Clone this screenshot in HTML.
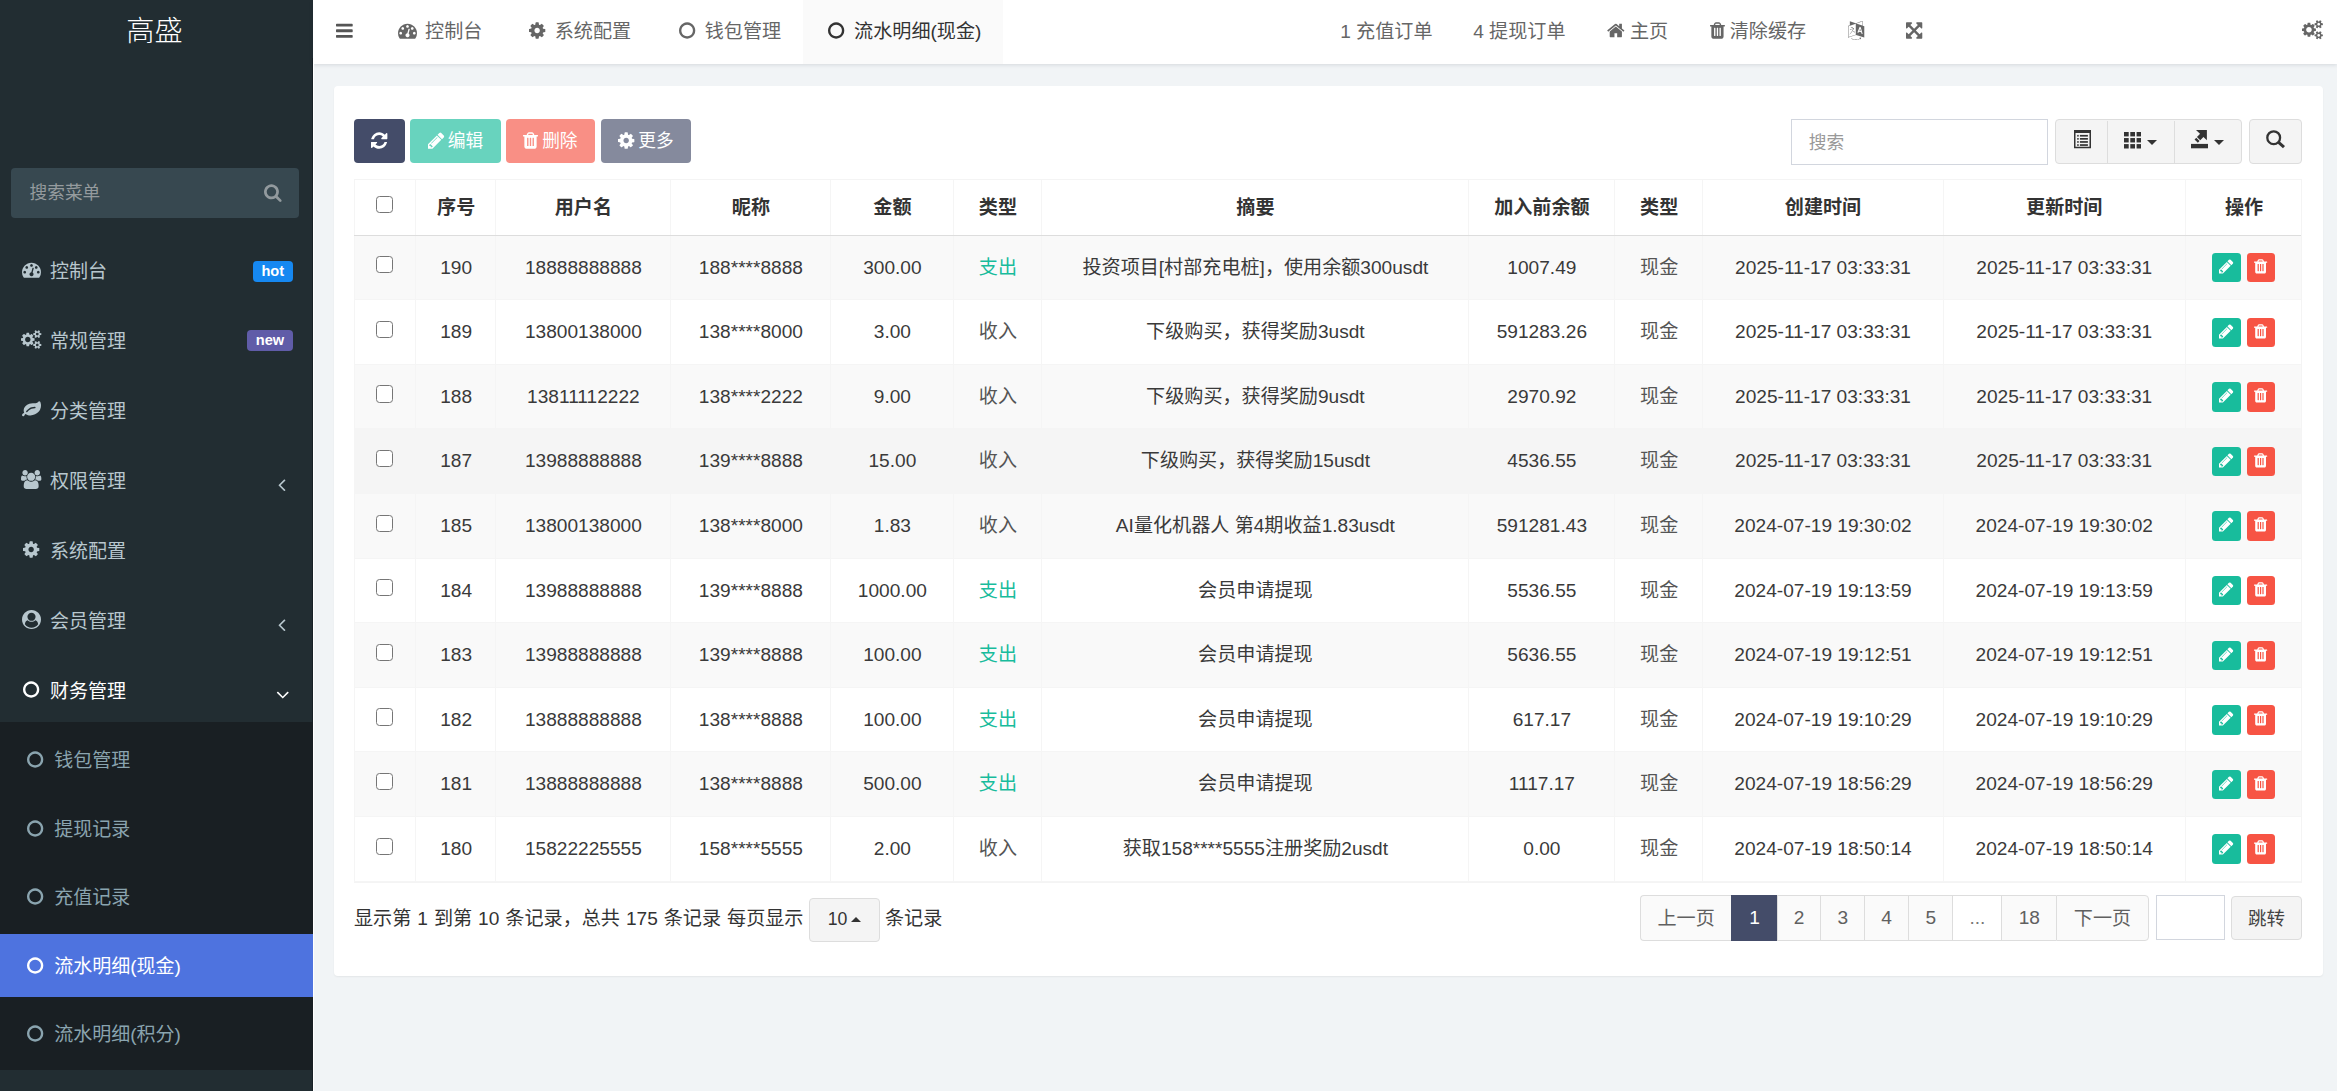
<!DOCTYPE html>
<html lang="zh-CN"><head><meta charset="utf-8"><title>高盛</title>
<style>
*{box-sizing:border-box;margin:0;padding:0}
html,body{width:2337px;height:1091px;overflow:hidden}
body{position:relative;background:#f1f4f6;font-family:"Liberation Sans","Noto Sans CJK SC",sans-serif;font-size:19.1px;color:#3a3a3a;line-height:1}
svg.fa{display:inline-block;fill:currentColor;overflow:visible}
.abs{position:absolute}
#sidebar{position:absolute;left:0;top:0;width:312.8px;height:1091px;background:#222d32}
#logo{position:absolute;left:0;top:0;width:313px;height:64px;line-height:62.4px;text-align:center;color:#fff;font-size:28.2px;font-weight:300;padding-right:4px}
#msearch{position:absolute;left:11px;top:168px;width:288px;height:49.5px;background:#374850;border-radius:4px;color:#959b9e;font-size:17.7px;line-height:51.5px;padding-left:18.5px}
#msearch svg{position:absolute;left:253px;top:15px;color:#929a9e}
.mi{position:absolute;left:0;width:313px;height:70px;color:#b8c7ce;font-size:19px;line-height:70px}
.mi .ic{position:absolute;left:19.2px;top:0;width:24.4px;text-align:center}
.mi .tx{position:absolute;left:50px;top:1.6px;white-space:nowrap}
.mi.act{color:#fff}
.badge{position:absolute;height:21.5px;line-height:21px;border-radius:4px;color:#fff;font-weight:bold;font-size:14.6px;text-align:center}
#sub{position:absolute;left:0;top:722px;width:313px;height:348px;background:#191f23}
.si{position:absolute;left:0;width:313px;height:63px;line-height:63px;color:#8aa4af;font-size:19px}
.si .ic{position:absolute;left:23.2px;top:.7px;width:24.4px;text-align:center}
.si .tx{position:absolute;left:54.2px;top:1.2px;white-space:nowrap}
.si.act{background:#4e73df;color:#fff}
#header{position:absolute;left:313px;top:0;width:2024px;height:64.3px;background:#fff;box-shadow:0 1px 4px rgba(0,21,41,.12);color:#666;font-size:19.1px;line-height:63.4px}
#header svg.fa{position:relative;top:-1px}
.tab{position:absolute;top:0;height:64px;white-space:nowrap}
.tab.act{background:#fafafa;color:#333}
.nv{position:absolute;top:0;height:64px;white-space:nowrap}
#panel{position:absolute;left:334px;top:85.8px;width:1988.7px;height:890.2px;background:#fff;border-radius:4px;box-shadow:0 1px 2px rgba(0,0,0,.06)}
.btn{position:absolute;top:119.4px;height:44px;word-spacing:-1.2px;border-radius:4px;color:#fff;font-size:17.7px;line-height:44px;text-align:center;white-space:nowrap}
.dis{opacity:.65}
.gbtn{position:absolute;background:#f4f4f4;border:1.36px solid #ddd;color:#333}
#tbl{position:absolute;left:0;top:0}
.row{position:absolute;left:353.7px;width:1947px;height:64.6px;border-bottom:1px solid #f5f5f5}
.row.odd{background:#f9f9f9}
.c{position:absolute;top:0;height:100%;text-align:center;white-space:nowrap;border-left:1px solid #f5f5f5;line-height:63.2px;padding-left:1.4px}
.hd{font-weight:bold;color:#333}
.c.hd{line-height:56px}
.cb{position:absolute;width:17.4px;height:17.4px;border:1.5px solid #767676;border-radius:3.5px;background:#fff}
.ob{position:absolute;width:29px;height:29.4px;border-radius:3.5px;color:#fff;display:flex;align-items:center;justify-content:center}
.ob svg{display:block;margin-top:-2.6px}
.pg{position:absolute;top:895.2px;height:45.4px;line-height:43px;text-align:center;background:#fafafa;border:1.36px solid #ddd;border-right-width:0;color:#606060;font-size:19.1px}
</style></head>
<body>
<div id="sidebar">
<div id="logo">高盛</div>
<div id="msearch">搜索菜单<svg class="fa" viewBox="0 -1536 1664 1792" style="width:17.64px;height:19.00px;vertical-align:-2.71px;"><path transform="scale(1,-1)" d="M1152 704q0 185 -131.5 316.5t-316.5 131.5t-316.5 -131.5t-131.5 -316.5t131.5 -316.5t316.5 -131.5t316.5 131.5t131.5 316.5zM1664 -128q0 -52 -38 -90t-90 -38q-54 0 -90 38l-343 342q-179 -124 -399 -124q-143 0 -273.5 55.5t-225 150t-150 225t-55.5 273.5 t55.5 273.5t150 225t225 150t273.5 55.5t273.5 -55.5t225 -150t150 -225t55.5 -273.5q0 -220 -124 -399l343 -343q37 -37 37 -90z"/></svg></div>
<div class="mi" style="top:235.0px"><span class="ic"><svg class="fa" viewBox="0 -1536 1792 1792" style="width:19.00px;height:19.00px;vertical-align:-2.71px;"><path transform="scale(1,-1)" d="M384 384q0 53 -37.5 90.5t-90.5 37.5t-90.5 -37.5t-37.5 -90.5t37.5 -90.5t90.5 -37.5t90.5 37.5t37.5 90.5zM576 832q0 53 -37.5 90.5t-90.5 37.5t-90.5 -37.5t-37.5 -90.5t37.5 -90.5t90.5 -37.5t90.5 37.5t37.5 90.5zM1004 351l101 382q6 26 -7.5 48.5t-38.5 29.5 t-48 -6.5t-30 -39.5l-101 -382q-60 -5 -107 -43.5t-63 -98.5q-20 -77 20 -146t117 -89t146 20t89 117q16 60 -6 117t-72 91zM1664 384q0 53 -37.5 90.5t-90.5 37.5t-90.5 -37.5t-37.5 -90.5t37.5 -90.5t90.5 -37.5t90.5 37.5t37.5 90.5zM1024 1024q0 53 -37.5 90.5 t-90.5 37.5t-90.5 -37.5t-37.5 -90.5t37.5 -90.5t90.5 -37.5t90.5 37.5t37.5 90.5zM1472 832q0 53 -37.5 90.5t-90.5 37.5t-90.5 -37.5t-37.5 -90.5t37.5 -90.5t90.5 -37.5t90.5 37.5t37.5 90.5zM1792 384q0 -261 -141 -483q-19 -29 -54 -29h-1402q-35 0 -54 29 q-141 221 -141 483q0 182 71 348t191 286t286 191t348 71t348 -71t286 -191t191 -286t71 -348z"/></svg></span><span class="tx">控制台</span></div>
<div class="mi" style="top:305.0px"><span class="ic"><svg class="fa" viewBox="0 -1536 1920 1792" style="width:20.36px;height:19.00px;vertical-align:-2.71px;"><path transform="scale(1,-1)" d="M896 640q0 106 -75 181t-181 75t-181 -75t-75 -181t75 -181t181 -75t181 75t75 181zM1664 128q0 52 -38 90t-90 38t-90 -38t-38 -90q0 -53 37.5 -90.5t90.5 -37.5t90.5 37.5t37.5 90.5zM1664 1152q0 52 -38 90t-90 38t-90 -38t-38 -90q0 -53 37.5 -90.5t90.5 -37.5 t90.5 37.5t37.5 90.5zM1280 731v-185q0 -10 -7 -19.5t-16 -10.5l-155 -24q-11 -35 -32 -76q34 -48 90 -115q7 -11 7 -20q0 -12 -7 -19q-23 -30 -82.5 -89.5t-78.5 -59.5q-11 0 -21 7l-115 90q-37 -19 -77 -31q-11 -108 -23 -155q-7 -24 -30 -24h-186q-11 0 -20 7.5t-10 17.5 l-23 153q-34 10 -75 31l-118 -89q-7 -7 -20 -7q-11 0 -21 8q-144 133 -144 160q0 9 7 19q10 14 41 53t47 61q-23 44 -35 82l-152 24q-10 1 -17 9.5t-7 19.5v185q0 10 7 19.5t16 10.5l155 24q11 35 32 76q-34 48 -90 115q-7 11 -7 20q0 12 7 20q22 30 82 89t79 59q11 0 21 -7 l115 -90q34 18 77 32q11 108 23 154q7 24 30 24h186q11 0 20 -7.5t10 -17.5l23 -153q34 -10 75 -31l118 89q8 7 20 7q11 0 21 -8q144 -133 144 -160q0 -8 -7 -19q-12 -16 -42 -54t-45 -60q23 -48 34 -82l152 -23q10 -2 17 -10.5t7 -19.5zM1920 198v-140q0 -16 -149 -31 q-12 -27 -30 -52q51 -113 51 -138q0 -4 -4 -7q-122 -71 -124 -71q-8 0 -46 47t-52 68q-20 -2 -30 -2t-30 2q-14 -21 -52 -68t-46 -47q-2 0 -124 71q-4 3 -4 7q0 25 51 138q-18 25 -30 52q-149 15 -149 31v140q0 16 149 31q13 29 30 52q-51 113 -51 138q0 4 4 7q4 2 35 20 t59 34t30 16q8 0 46 -46.5t52 -67.5q20 2 30 2t30 -2q51 71 92 112l6 2q4 0 124 -70q4 -3 4 -7q0 -25 -51 -138q17 -23 30 -52q149 -15 149 -31zM1920 1222v-140q0 -16 -149 -31q-12 -27 -30 -52q51 -113 51 -138q0 -4 -4 -7q-122 -71 -124 -71q-8 0 -46 47t-52 68 q-20 -2 -30 -2t-30 2q-14 -21 -52 -68t-46 -47q-2 0 -124 71q-4 3 -4 7q0 25 51 138q-18 25 -30 52q-149 15 -149 31v140q0 16 149 31q13 29 30 52q-51 113 -51 138q0 4 4 7q4 2 35 20t59 34t30 16q8 0 46 -46.5t52 -67.5q20 2 30 2t30 -2q51 71 92 112l6 2q4 0 124 -70 q4 -3 4 -7q0 -25 -51 -138q17 -23 30 -52q149 -15 149 -31z"/></svg></span><span class="tx">常规管理</span></div>
<div class="mi" style="top:375.0px"><span class="ic"><svg class="fa" viewBox="0 -1536 1792 1792" style="width:19.00px;height:19.00px;vertical-align:-2.71px;"><path transform="scale(1,-1)" d="M1280 832q0 26 -19 45t-45 19q-172 0 -318 -49.5t-259.5 -134t-235.5 -219.5q-19 -21 -19 -45q0 -26 19 -45t45 -19q24 0 45 19q27 24 74 71t67 66q137 124 268.5 176t313.5 52q26 0 45 19t19 45zM1792 1030q0 -95 -20 -193q-46 -224 -184.5 -383t-357.5 -268 q-214 -108 -438 -108q-148 0 -286 47q-15 5 -88 42t-96 37q-16 0 -39.5 -32t-45 -70t-52.5 -70t-60 -32q-43 0 -63.5 17.5t-45.5 59.5q-2 4 -6 11t-5.5 10t-3 9.5t-1.5 13.5q0 35 31 73.5t68 65.5t68 56t31 48q0 4 -14 38t-16 44q-9 51 -9 104q0 115 43.5 220t119 184.5 t170.5 139t204 95.5q55 18 145 25.5t179.5 9t178.5 6t163.5 24t113.5 56.5l29.5 29.5t29.5 28t27 20t36.5 16t43.5 4.5q39 0 70.5 -46t47.5 -112t24 -124t8 -96z"/></svg></span><span class="tx">分类管理</span></div>
<div class="mi" style="top:445.0px"><span class="ic"><svg class="fa" viewBox="0 -1536 1920 1792" style="width:20.36px;height:19.00px;vertical-align:-2.71px;"><path transform="scale(1,-1)" d="M593 640q-162 -5 -265 -128h-134q-82 0 -138 40.5t-56 118.5q0 353 124 353q6 0 43.5 -21t97.5 -42.5t119 -21.5q67 0 133 23q-5 -37 -5 -66q0 -139 81 -256zM1664 3q0 -120 -73 -189.5t-194 -69.5h-874q-121 0 -194 69.5t-73 189.5q0 53 3.5 103.5t14 109t26.5 108.5 t43 97.5t62 81t85.5 53.5t111.5 20q10 0 43 -21.5t73 -48t107 -48t135 -21.5t135 21.5t107 48t73 48t43 21.5q61 0 111.5 -20t85.5 -53.5t62 -81t43 -97.5t26.5 -108.5t14 -109t3.5 -103.5zM640 1280q0 -106 -75 -181t-181 -75t-181 75t-75 181t75 181t181 75t181 -75 t75 -181zM1344 896q0 -159 -112.5 -271.5t-271.5 -112.5t-271.5 112.5t-112.5 271.5t112.5 271.5t271.5 112.5t271.5 -112.5t112.5 -271.5zM1920 671q0 -78 -56 -118.5t-138 -40.5h-134q-103 123 -265 128q81 117 81 256q0 29 -5 66q66 -23 133 -23q59 0 119 21.5t97.5 42.5 t43.5 21q124 0 124 -353zM1792 1280q0 -106 -75 -181t-181 -75t-181 75t-75 181t75 181t181 75t181 -75t75 -181z"/></svg></span><span class="tx">权限管理</span></div>
<div class="mi" style="top:515.0px"><span class="ic"><svg class="fa" viewBox="0 -1536 1536 1792" style="width:16.29px;height:19.00px;vertical-align:-2.71px;"><path transform="scale(1,-1)" d="M1024 640q0 106 -75 181t-181 75t-181 -75t-75 -181t75 -181t181 -75t181 75t75 181zM1536 749v-222q0 -12 -8 -23t-20 -13l-185 -28q-19 -54 -39 -91q35 -50 107 -138q10 -12 10 -25t-9 -23q-27 -37 -99 -108t-94 -71q-12 0 -26 9l-138 108q-44 -23 -91 -38 q-16 -136 -29 -186q-7 -28 -36 -28h-222q-14 0 -24.5 8.5t-11.5 21.5l-28 184q-49 16 -90 37l-141 -107q-10 -9 -25 -9q-14 0 -25 11q-126 114 -165 168q-7 10 -7 23q0 12 8 23q15 21 51 66.5t54 70.5q-27 50 -41 99l-183 27q-13 2 -21 12.5t-8 23.5v222q0 12 8 23t19 13 l186 28q14 46 39 92q-40 57 -107 138q-10 12 -10 24q0 10 9 23q26 36 98.5 107.5t94.5 71.5q13 0 26 -10l138 -107q44 23 91 38q16 136 29 186q7 28 36 28h222q14 0 24.5 -8.5t11.5 -21.5l28 -184q49 -16 90 -37l142 107q9 9 24 9q13 0 25 -10q129 -119 165 -170q7 -8 7 -22 q0 -12 -8 -23q-15 -21 -51 -66.5t-54 -70.5q26 -50 41 -98l183 -28q13 -2 21 -12.5t8 -23.5z"/></svg></span><span class="tx">系统配置</span></div>
<div class="mi" style="top:585.0px"><span class="ic"><svg class="fa" viewBox="0 -1536 1792 1792" style="width:19.00px;height:19.00px;vertical-align:-2.71px;"><path transform="scale(1,-1)" d="M1523 197q-22 155 -87.5 257.5t-184.5 118.5q-67 -74 -159.5 -115.5t-195.5 -41.5t-195.5 41.5t-159.5 115.5q-119 -16 -184.5 -118.5t-87.5 -257.5q106 -150 271 -237.5t356 -87.5t356 87.5t271 237.5zM1280 896q0 159 -112.5 271.5t-271.5 112.5t-271.5 -112.5 t-112.5 -271.5t112.5 -271.5t271.5 -112.5t271.5 112.5t112.5 271.5zM1792 640q0 -182 -71 -347.5t-190.5 -286t-285.5 -191.5t-349 -71q-182 0 -348 71t-286 191t-191 286t-71 348t71 348t191 286t286 191t348 71t348 -71t286 -191t191 -286t71 -348z"/></svg></span><span class="tx">会员管理</span></div>
<div class="mi act" style="top:655.0px"><span class="ic"><svg class="fa" viewBox="0 -1536 1536 1792" style="width:16.29px;height:19.00px;vertical-align:-2.71px;"><path transform="scale(1,-1)" d="M768 1184q-148 0 -273 -73t-198 -198t-73 -273t73 -273t198 -198t273 -73t273 73t198 198t73 273t-73 273t-198 198t-273 73zM1536 640q0 -209 -103 -385.5t-279.5 -279.5t-385.5 -103t-385.5 103t-279.5 279.5t-103 385.5t103 385.5t279.5 279.5t385.5 103t385.5 -103 t279.5 -279.5t103 -385.5z"/></svg></span><span class="tx">财务管理</span></div>
<div class="badge" style="left:252.6px;top:260.5px;width:40.4px;background:#1688f1">hot</div>
<div class="badge" style="left:247px;top:329.5px;width:46px;background:#605ca8">new</div>
<div class="abs" style="left:278px;top:474px;color:#b8c7ce"><svg class="fa" viewBox="0 -1536 640 1792" style="width:7.50px;height:21.00px;vertical-align:-3.00px;"><path transform="scale(1,-1)" d="M627 992q0 -13 -10 -23l-393 -393l393 -393q10 -10 10 -23t-10 -23l-50 -50q-10 -10 -23 -10t-23 10l-466 466q-10 10 -10 23t10 23l466 466q10 10 23 10t23 -10l50 -50q10 -10 10 -23z"/></svg></div>
<div class="abs" style="left:278px;top:614px;color:#b8c7ce"><svg class="fa" viewBox="0 -1536 640 1792" style="width:7.50px;height:21.00px;vertical-align:-3.00px;"><path transform="scale(1,-1)" d="M627 992q0 -13 -10 -23l-393 -393l393 -393q10 -10 10 -23t-10 -23l-50 -50q-10 -10 -23 -10t-23 10l-466 466q-10 10 -10 23t10 23l466 466q10 10 23 10t23 -10l50 -50q10 -10 10 -23z"/></svg></div>
<div class="abs" style="left:276px;top:684px;color:#fff"><svg class="fa" viewBox="0 -1536 1152 1792" style="width:13.50px;height:21.00px;vertical-align:-3.00px;"><path transform="scale(1,-1)" d="M1075 800q0 -13 -10 -23l-466 -466q-10 -10 -23 -10t-23 10l-466 466q-10 10 -10 23t10 23l50 50q10 10 23 10t23 -10l393 -393l393 393q10 10 23 10t23 -10l50 -50q10 -10 10 -23z"/></svg></div>
<div id="sub">
<div class="si" style="top:5.5px"><span class="ic"><svg class="fa" viewBox="0 -1536 1536 1792" style="width:16.29px;height:19.00px;vertical-align:-2.71px;"><path transform="scale(1,-1)" d="M768 1184q-148 0 -273 -73t-198 -198t-73 -273t73 -273t198 -198t273 -73t273 73t198 198t73 273t-73 273t-198 198t-273 73zM1536 640q0 -209 -103 -385.5t-279.5 -279.5t-385.5 -103t-385.5 103t-279.5 279.5t-103 385.5t103 385.5t279.5 279.5t385.5 103t385.5 -103 t279.5 -279.5t103 -385.5z"/></svg></span><span class="tx">钱包管理</span></div>
<div class="si" style="top:74.5px"><span class="ic"><svg class="fa" viewBox="0 -1536 1536 1792" style="width:16.29px;height:19.00px;vertical-align:-2.71px;"><path transform="scale(1,-1)" d="M768 1184q-148 0 -273 -73t-198 -198t-73 -273t73 -273t198 -198t273 -73t273 73t198 198t73 273t-73 273t-198 198t-273 73zM1536 640q0 -209 -103 -385.5t-279.5 -279.5t-385.5 -103t-385.5 103t-279.5 279.5t-103 385.5t103 385.5t279.5 279.5t385.5 103t385.5 -103 t279.5 -279.5t103 -385.5z"/></svg></span><span class="tx">提现记录</span></div>
<div class="si" style="top:143.0px"><span class="ic"><svg class="fa" viewBox="0 -1536 1536 1792" style="width:16.29px;height:19.00px;vertical-align:-2.71px;"><path transform="scale(1,-1)" d="M768 1184q-148 0 -273 -73t-198 -198t-73 -273t73 -273t198 -198t273 -73t273 73t198 198t73 273t-73 273t-198 198t-273 73zM1536 640q0 -209 -103 -385.5t-279.5 -279.5t-385.5 -103t-385.5 103t-279.5 279.5t-103 385.5t103 385.5t279.5 279.5t385.5 103t385.5 -103 t279.5 -279.5t103 -385.5z"/></svg></span><span class="tx">充值记录</span></div>
<div class="si act" style="top:212.0px"><span class="ic"><svg class="fa" viewBox="0 -1536 1536 1792" style="width:16.29px;height:19.00px;vertical-align:-2.71px;"><path transform="scale(1,-1)" d="M768 1184q-148 0 -273 -73t-198 -198t-73 -273t73 -273t198 -198t273 -73t273 73t198 198t73 273t-73 273t-198 198t-273 73zM1536 640q0 -209 -103 -385.5t-279.5 -279.5t-385.5 -103t-385.5 103t-279.5 279.5t-103 385.5t103 385.5t279.5 279.5t385.5 103t385.5 -103 t279.5 -279.5t103 -385.5z"/></svg></span><span class="tx">流水明细(现金)</span></div>
<div class="si" style="top:280.0px"><span class="ic"><svg class="fa" viewBox="0 -1536 1536 1792" style="width:16.29px;height:19.00px;vertical-align:-2.71px;"><path transform="scale(1,-1)" d="M768 1184q-148 0 -273 -73t-198 -198t-73 -273t73 -273t198 -198t273 -73t273 73t198 198t73 273t-73 273t-198 198t-273 73zM1536 640q0 -209 -103 -385.5t-279.5 -279.5t-385.5 -103t-385.5 103t-279.5 279.5t-103 385.5t103 385.5t279.5 279.5t385.5 103t385.5 -103 t279.5 -279.5t103 -385.5z"/></svg></span><span class="tx">流水明细(积分)</span></div>
</div>
</div>
<div id="header">
<div class="abs" style="left:22.5px;top:1px;color:#555"><svg class="fa" viewBox="0 -1536 1536 1792" style="width:16.71px;height:19.50px;vertical-align:-2.79px;"><path transform="scale(1,-1)" d="M1536 192v-128q0 -26 -19 -45t-45 -19h-1408q-26 0 -45 19t-19 45v128q0 26 19 45t45 19h1408q26 0 45 -19t19 -45zM1536 704v-128q0 -26 -19 -45t-45 -19h-1408q-26 0 -45 19t-19 45v128q0 26 19 45t45 19h1408q26 0 45 -19t19 -45zM1536 1216v-128q0 -26 -19 -45 t-45 -19h-1408q-26 0 -45 19t-19 45v128q0 26 19 45t45 19h1408q26 0 45 -19t19 -45z"/></svg></div>
<div class="tab" style="left:62.0px;width:128.7px;padding-left:20.4px"><svg class="fa" viewBox="0 -1536 1792 1792" style="width:19.00px;height:19.00px;vertical-align:-2.71px;margin:0 2.71px;"><path transform="scale(1,-1)" d="M384 384q0 53 -37.5 90.5t-90.5 37.5t-90.5 -37.5t-37.5 -90.5t37.5 -90.5t90.5 -37.5t90.5 37.5t37.5 90.5zM576 832q0 53 -37.5 90.5t-90.5 37.5t-90.5 -37.5t-37.5 -90.5t37.5 -90.5t90.5 -37.5t90.5 37.5t37.5 90.5zM1004 351l101 382q6 26 -7.5 48.5t-38.5 29.5 t-48 -6.5t-30 -39.5l-101 -382q-60 -5 -107 -43.5t-63 -98.5q-20 -77 20 -146t117 -89t146 20t89 117q16 60 -6 117t-72 91zM1664 384q0 53 -37.5 90.5t-90.5 37.5t-90.5 -37.5t-37.5 -90.5t37.5 -90.5t90.5 -37.5t90.5 37.5t37.5 90.5zM1024 1024q0 53 -37.5 90.5 t-90.5 37.5t-90.5 -37.5t-37.5 -90.5t37.5 -90.5t90.5 -37.5t90.5 37.5t37.5 90.5zM1472 832q0 53 -37.5 90.5t-90.5 37.5t-90.5 -37.5t-37.5 -90.5t37.5 -90.5t90.5 -37.5t90.5 37.5t37.5 90.5zM1792 384q0 -261 -141 -483q-19 -29 -54 -29h-1402q-35 0 -54 29 q-141 221 -141 483q0 182 71 348t191 286t286 191t348 71t348 -71t286 -191t191 -286t71 -348z"/></svg> 控制台</div>
<div class="tab" style="left:191.6px;width:148.9px;padding-left:20.4px"><svg class="fa" viewBox="0 -1536 1536 1792" style="width:16.29px;height:19.00px;vertical-align:-2.71px;margin:0 4.07px;"><path transform="scale(1,-1)" d="M1024 640q0 106 -75 181t-181 75t-181 -75t-75 -181t75 -181t181 -75t181 75t75 181zM1536 749v-222q0 -12 -8 -23t-20 -13l-185 -28q-19 -54 -39 -91q35 -50 107 -138q10 -12 10 -25t-9 -23q-27 -37 -99 -108t-94 -71q-12 0 -26 9l-138 108q-44 -23 -91 -38 q-16 -136 -29 -186q-7 -28 -36 -28h-222q-14 0 -24.5 8.5t-11.5 21.5l-28 184q-49 16 -90 37l-141 -107q-10 -9 -25 -9q-14 0 -25 11q-126 114 -165 168q-7 10 -7 23q0 12 8 23q15 21 51 66.5t54 70.5q-27 50 -41 99l-183 27q-13 2 -21 12.5t-8 23.5v222q0 12 8 23t19 13 l186 28q14 46 39 92q-40 57 -107 138q-10 12 -10 24q0 10 9 23q26 36 98.5 107.5t94.5 71.5q13 0 26 -10l138 -107q44 23 91 38q16 136 29 186q7 28 36 28h222q14 0 24.5 -8.5t11.5 -21.5l28 -184q49 -16 90 -37l142 107q9 9 24 9q13 0 25 -10q129 -119 165 -170q7 -8 7 -22 q0 -12 -8 -23q-15 -21 -51 -66.5t-54 -70.5q26 -50 41 -98l183 -28q13 -2 21 -12.5t8 -23.5z"/></svg> 系统配置</div>
<div class="tab" style="left:341.6px;width:147.4px;padding-left:20.4px"><svg class="fa" viewBox="0 -1536 1536 1792" style="width:16.29px;height:19.00px;vertical-align:-2.71px;margin:0 4.07px;"><path transform="scale(1,-1)" d="M768 1184q-148 0 -273 -73t-198 -198t-73 -273t73 -273t198 -198t273 -73t273 73t198 198t73 273t-73 273t-198 198t-273 73zM1536 640q0 -209 -103 -385.5t-279.5 -279.5t-385.5 -103t-385.5 103t-279.5 279.5t-103 385.5t103 385.5t279.5 279.5t385.5 103t385.5 -103 t279.5 -279.5t103 -385.5z"/></svg> 钱包管理</div>
<div class="tab act" style="left:490.0px;width:200.0px;padding-left:21.4px"><svg class="fa" viewBox="0 -1536 1536 1792" style="width:16.29px;height:19.00px;vertical-align:-2.71px;margin:0 4.07px;"><path transform="scale(1,-1)" d="M768 1184q-148 0 -273 -73t-198 -198t-73 -273t73 -273t198 -198t273 -73t273 73t198 198t73 273t-73 273t-198 198t-273 73zM1536 640q0 -209 -103 -385.5t-279.5 -279.5t-385.5 -103t-385.5 103t-279.5 279.5t-103 385.5t103 385.5t279.5 279.5t385.5 103t385.5 -103 t279.5 -279.5t103 -385.5z"/></svg> 流水明细(现金)</div>
<div class="nv" style="left:1027.2px">1 充值订单</div>
<div class="nv" style="left:1160.2px">4 提现订单</div>
<div class="nv" style="left:1294.0px"><svg class="fa" viewBox="0 -1536 1664 1792" style="width:17.64px;height:19.00px;vertical-align:-2.71px;"><path transform="scale(1,-1)" d="M1408 544v-480q0 -26 -19 -45t-45 -19h-384v384h-256v-384h-384q-26 0 -45 19t-19 45v480q0 1 0.5 3t0.5 3l575 474l575 -474q1 -2 1 -6zM1631 613l-62 -74q-8 -9 -21 -11h-3q-13 0 -21 7l-692 577l-692 -577q-12 -8 -24 -7q-13 2 -21 11l-62 74q-8 10 -7 23.5t11 21.5 l719 599q32 26 76 26t76 -26l244 -204v195q0 14 9 23t23 9h192q14 0 23 -9t9 -23v-408l219 -182q10 -8 11 -21.5t-7 -23.5z"/></svg> 主页</div>
<div class="nv" style="left:1396.5px"><svg class="fa" viewBox="0 -1536 1408 1792" style="width:14.93px;height:19.00px;vertical-align:-2.71px;"><path transform="scale(1,-1)" d="M512 160v704q0 14 -9 23t-23 9h-64q-14 0 -23 -9t-9 -23v-704q0 -14 9 -23t23 -9h64q14 0 23 9t9 23zM768 160v704q0 14 -9 23t-23 9h-64q-14 0 -23 -9t-9 -23v-704q0 -14 9 -23t23 -9h64q14 0 23 9t9 23zM1024 160v704q0 14 -9 23t-23 9h-64q-14 0 -23 -9t-9 -23v-704 q0 -14 9 -23t23 -9h64q14 0 23 9t9 23zM480 1152h448l-48 117q-7 9 -17 11h-317q-10 -2 -17 -11zM1408 1120v-64q0 -14 -9 -23t-23 -9h-96v-948q0 -83 -47 -143.5t-113 -60.5h-832q-66 0 -113 58.5t-47 141.5v952h-96q-14 0 -23 9t-9 23v64q0 14 9 23t23 9h309l70 167 q15 37 54 63t79 26h320q40 0 79 -26t54 -63l70 -167h309q14 0 23 -9t9 -23z"/></svg> 清除缓存</div>
<div class="nv" style="left:1535.0px"><svg class="fa" viewBox="0 -1536 1536 1792" style="width:16.29px;height:19.00px;vertical-align:-2.71px;"><path transform="scale(1,-1)" d="M654 458q-1 -3 -12.5 0.5t-31.5 11.5l-20 9q-44 20 -87 49q-7 5 -41 31.5t-38 28.5q-67 -103 -134 -181q-81 -95 -105 -110q-4 -2 -19.5 -4t-18.5 0q6 4 82 92q21 24 85.5 115t78.5 118q17 30 51 98.5t36 77.5q-8 1 -110 -33q-8 -2 -27.5 -7.5t-34.5 -9.5t-17 -5 q-2 -2 -2 -10.5t-1 -9.5q-5 -10 -31 -15q-23 -7 -47 0q-18 4 -28 21q-4 6 -5 23q6 2 24.5 5t29.5 6q58 16 105 32q100 35 102 35q10 2 43 19.5t44 21.5q9 3 21.5 8t14.5 5.5t6 -0.5q2 -12 -1 -33q0 -2 -12.5 -27t-26.5 -53.5t-17 -33.5q-25 -50 -77 -131l64 -28 q12 -6 74.5 -32t67.5 -28q4 -1 10.5 -25.5t4.5 -30.5zM449 944q3 -15 -4 -28q-12 -23 -50 -38q-30 -12 -60 -12q-26 3 -49 26q-14 15 -18 41l1 3q3 -3 19.5 -5t26.5 0t58 16q36 12 55 14q17 0 21 -17zM1147 815l63 -227l-139 42zM39 15l694 232v1032l-694 -233v-1031z M1280 332l102 -31l-181 657l-100 31l-216 -536l102 -31l45 110l211 -65zM777 1294l573 -184v380zM1088 -29l158 -13l-54 -160l-40 66q-130 -83 -276 -108q-58 -12 -91 -12h-84q-79 0 -199.5 39t-183.5 85q-8 7 -8 16q0 8 5 13.5t13 5.5q4 0 18 -7.5t30.5 -16.5t20.5 -11 q73 -37 159.5 -61.5t157.5 -24.5q95 0 167 14.5t157 50.5q15 7 30.5 15.5t34 19t28.5 16.5zM1536 1050v-1079l-774 246q-14 -6 -375 -127.5t-368 -121.5q-13 0 -18 13q0 1 -1 3v1078q3 9 4 10q5 6 20 11q107 36 149 50v384l558 -198q2 0 160.5 55t316 108.5t161.5 53.5 q20 0 20 -21v-418z"/></svg></div>
<div class="nv" style="left:1593.0px"><svg class="fa" viewBox="0 -1536 1536 1792" style="width:16.29px;height:19.00px;vertical-align:-2.71px;"><path transform="scale(1,-1)" d="M1283 995l-355 -355l355 -355l144 144q29 31 70 14q39 -17 39 -59v-448q0 -26 -19 -45t-45 -19h-448q-42 0 -59 40q-17 39 14 69l144 144l-355 355l-355 -355l144 -144q31 -30 14 -69q-17 -40 -59 -40h-448q-26 0 -45 19t-19 45v448q0 42 40 59q39 17 69 -14l144 -144 l355 355l-355 355l-144 -144q-19 -19 -45 -19q-12 0 -24 5q-40 17 -40 59v448q0 26 19 45t45 19h448q42 0 59 -40q17 -39 -14 -69l-144 -144l355 -355l355 355l-144 144q-31 30 -14 69q17 40 59 40h448q26 0 45 -19t19 -45v-448q0 -42 -39 -59q-13 -5 -25 -5q-26 0 -45 19z"/></svg></div>
<div class="nv" style="left:1989.0px"><svg class="fa" viewBox="0 -1536 1920 1792" style="width:20.89px;height:19.50px;vertical-align:-2.79px;"><path transform="scale(1,-1)" d="M896 640q0 106 -75 181t-181 75t-181 -75t-75 -181t75 -181t181 -75t181 75t75 181zM1664 128q0 52 -38 90t-90 38t-90 -38t-38 -90q0 -53 37.5 -90.5t90.5 -37.5t90.5 37.5t37.5 90.5zM1664 1152q0 52 -38 90t-90 38t-90 -38t-38 -90q0 -53 37.5 -90.5t90.5 -37.5 t90.5 37.5t37.5 90.5zM1280 731v-185q0 -10 -7 -19.5t-16 -10.5l-155 -24q-11 -35 -32 -76q34 -48 90 -115q7 -11 7 -20q0 -12 -7 -19q-23 -30 -82.5 -89.5t-78.5 -59.5q-11 0 -21 7l-115 90q-37 -19 -77 -31q-11 -108 -23 -155q-7 -24 -30 -24h-186q-11 0 -20 7.5t-10 17.5 l-23 153q-34 10 -75 31l-118 -89q-7 -7 -20 -7q-11 0 -21 8q-144 133 -144 160q0 9 7 19q10 14 41 53t47 61q-23 44 -35 82l-152 24q-10 1 -17 9.5t-7 19.5v185q0 10 7 19.5t16 10.5l155 24q11 35 32 76q-34 48 -90 115q-7 11 -7 20q0 12 7 20q22 30 82 89t79 59q11 0 21 -7 l115 -90q34 18 77 32q11 108 23 154q7 24 30 24h186q11 0 20 -7.5t10 -17.5l23 -153q34 -10 75 -31l118 89q8 7 20 7q11 0 21 -8q144 -133 144 -160q0 -8 -7 -19q-12 -16 -42 -54t-45 -60q23 -48 34 -82l152 -23q10 -2 17 -10.5t7 -19.5zM1920 198v-140q0 -16 -149 -31 q-12 -27 -30 -52q51 -113 51 -138q0 -4 -4 -7q-122 -71 -124 -71q-8 0 -46 47t-52 68q-20 -2 -30 -2t-30 2q-14 -21 -52 -68t-46 -47q-2 0 -124 71q-4 3 -4 7q0 25 51 138q-18 25 -30 52q-149 15 -149 31v140q0 16 149 31q13 29 30 52q-51 113 -51 138q0 4 4 7q4 2 35 20 t59 34t30 16q8 0 46 -46.5t52 -67.5q20 2 30 2t30 -2q51 71 92 112l6 2q4 0 124 -70q4 -3 4 -7q0 -25 -51 -138q17 -23 30 -52q149 -15 149 -31zM1920 1222v-140q0 -16 -149 -31q-12 -27 -30 -52q51 -113 51 -138q0 -4 -4 -7q-122 -71 -124 -71q-8 0 -46 47t-52 68 q-20 -2 -30 -2t-30 2q-14 -21 -52 -68t-46 -47q-2 0 -124 71q-4 3 -4 7q0 25 51 138q-18 25 -30 52q-149 15 -149 31v140q0 16 149 31q13 29 30 52q-51 113 -51 138q0 4 4 7q4 2 35 20t59 34t30 16q8 0 46 -46.5t52 -67.5q20 2 30 2t30 -2q51 71 92 112l6 2q4 0 124 -70 q4 -3 4 -7q0 -25 -51 -138q17 -23 30 -52q149 -15 149 -31z"/></svg></div>
</div>
<div class="abs" style="left:312px;top:58px;width:1px;height:664px;background:#182126"></div>
<div class="abs" style="left:312px;top:1070px;width:1px;height:21px;background:#182126"></div>
<div class="abs" style="left:313px;top:64px;width:1px;height:1027px;background:#fff"></div>
<div id="panel"></div>
<div class="btn" style="left:354px;width:51px;background:#444c69"><svg class="fa" viewBox="0 -1536 1536 1792" style="width:16.37px;height:19.10px;vertical-align:-2.73px;"><path transform="scale(1,-1)" d="M1511 480q0 -5 -1 -7q-64 -268 -268 -434.5t-478 -166.5q-146 0 -282.5 55t-243.5 157l-129 -129q-19 -19 -45 -19t-45 19t-19 45v448q0 26 19 45t45 19h448q26 0 45 -19t19 -45t-19 -45l-137 -137q71 -66 161 -102t187 -36q134 0 250 65t186 179q11 17 53 117 q8 23 30 23h192q13 0 22.5 -9.5t9.5 -22.5zM1536 1280v-448q0 -26 -19 -45t-45 -19h-448q-26 0 -45 19t-19 45t19 45l138 138q-148 137 -349 137q-134 0 -250 -65t-186 -179q-11 -17 -53 -117q-8 -23 -30 -23h-199q-13 0 -22.5 9.5t-9.5 22.5v7q65 268 270 434.5t480 166.5 q146 0 284 -55.5t245 -156.5l130 129q19 19 45 19t45 -19t19 -45z"/></svg></div>
<div class="btn dis" style="left:410px;width:91px;background:#18bc9c"><svg class="fa" viewBox="0 -1536 1536 1792" style="width:16.37px;height:19.10px;vertical-align:-2.73px;"><path transform="scale(1,-1)" d="M363 0l91 91l-235 235l-91 -91v-107h128v-128h107zM886 928q0 22 -22 22q-10 0 -17 -7l-542 -542q-7 -7 -7 -17q0 -22 22 -22q10 0 17 7l542 542q7 7 7 17zM832 1120l416 -416l-832 -832h-416v416zM1515 1024q0 -53 -37 -90l-166 -166l-416 416l166 165q36 38 90 38 q53 0 91 -38l235 -234q37 -39 37 -91z"/></svg> 编辑</div>
<div class="btn dis" style="left:506px;width:89px;background:#f75444"><svg class="fa" viewBox="0 -1536 1408 1792" style="width:15.01px;height:19.10px;vertical-align:-2.73px;"><path transform="scale(1,-1)" d="M512 160v704q0 14 -9 23t-23 9h-64q-14 0 -23 -9t-9 -23v-704q0 -14 9 -23t23 -9h64q14 0 23 9t9 23zM768 160v704q0 14 -9 23t-23 9h-64q-14 0 -23 -9t-9 -23v-704q0 -14 9 -23t23 -9h64q14 0 23 9t9 23zM1024 160v704q0 14 -9 23t-23 9h-64q-14 0 -23 -9t-9 -23v-704 q0 -14 9 -23t23 -9h64q14 0 23 9t9 23zM480 1152h448l-48 117q-7 9 -17 11h-317q-10 -2 -17 -11zM1408 1120v-64q0 -14 -9 -23t-23 -9h-96v-948q0 -83 -47 -143.5t-113 -60.5h-832q-66 0 -113 58.5t-47 141.5v952h-96q-14 0 -23 9t-9 23v64q0 14 9 23t23 9h309l70 167 q15 37 54 63t79 26h320q40 0 79 -26t54 -63l70 -167h309q14 0 23 -9t9 -23z"/></svg> 删除</div>
<div class="btn dis" style="left:600.6px;width:90.8px;background:#444c69"><svg class="fa" viewBox="0 -1536 1536 1792" style="width:16.37px;height:19.10px;vertical-align:-2.73px;"><path transform="scale(1,-1)" d="M1024 640q0 106 -75 181t-181 75t-181 -75t-75 -181t75 -181t181 -75t181 75t75 181zM1536 749v-222q0 -12 -8 -23t-20 -13l-185 -28q-19 -54 -39 -91q35 -50 107 -138q10 -12 10 -25t-9 -23q-27 -37 -99 -108t-94 -71q-12 0 -26 9l-138 108q-44 -23 -91 -38 q-16 -136 -29 -186q-7 -28 -36 -28h-222q-14 0 -24.5 8.5t-11.5 21.5l-28 184q-49 16 -90 37l-141 -107q-10 -9 -25 -9q-14 0 -25 11q-126 114 -165 168q-7 10 -7 23q0 12 8 23q15 21 51 66.5t54 70.5q-27 50 -41 99l-183 27q-13 2 -21 12.5t-8 23.5v222q0 12 8 23t19 13 l186 28q14 46 39 92q-40 57 -107 138q-10 12 -10 24q0 10 9 23q26 36 98.5 107.5t94.5 71.5q13 0 26 -10l138 -107q44 23 91 38q16 136 29 186q7 28 36 28h222q14 0 24.5 -8.5t11.5 -21.5l28 -184q49 -16 90 -37l142 107q9 9 24 9q13 0 25 -10q129 -119 165 -170q7 -8 7 -22 q0 -12 -8 -23q-15 -21 -51 -66.5t-54 -70.5q26 -50 41 -98l183 -28q13 -2 21 -12.5t8 -23.5z"/></svg> 更多</div>
<div class="abs" style="left:1791.2px;top:119px;width:256.7px;height:45.8px;border:1.36px solid #d2d6de;background:#fff;color:#999;font-size:17.7px;line-height:46px;padding-left:16.5px">搜索</div>
<div class="gbtn" style="left:2055.3px;top:119px;width:186.6px;height:44.5px;border-radius:4px"></div>
<div class="abs" style="left:2107.2px;top:120.5px;width:1px;height:42px;background:#ddd"></div>
<div class="abs" style="left:2173.5px;top:120.5px;width:1px;height:42px;background:#ddd"></div>
<svg class="abs" style="left:2073.9px;top:130.4px;width:17px;height:18.3px" viewBox="0 0 17 18.3" fill="#333"><path fill-rule="evenodd" d="M0 0h17v18.3H0zM1.5 3v13.8h14V3z"/><rect x="3.2" y="4.9" width="1.5" height="1.7"/><rect x="5.9" y="4.9" width="8" height="1.7"/><rect x="3.2" y="8.0" width="1.5" height="1.7"/><rect x="5.9" y="8.0" width="8" height="1.7"/><rect x="3.2" y="11.1" width="1.5" height="1.7"/><rect x="5.9" y="11.1" width="8" height="1.7"/><rect x="3.2" y="14.2" width="1.5" height="1.7"/><rect x="5.9" y="14.2" width="8" height="1.7"/></svg>
<svg class="abs" style="left:2123.7px;top:132.2px;width:17.3px;height:16.5px" viewBox="0 0 17.3 16.5" fill="#333"><rect x="0.00" y="0.00" width="4.7" height="4.4"/><rect x="6.30" y="0.00" width="4.7" height="4.4"/><rect x="12.60" y="0.00" width="4.7" height="4.4"/><rect x="0.00" y="6.05" width="4.7" height="4.4"/><rect x="6.30" y="6.05" width="4.7" height="4.4"/><rect x="12.60" y="6.05" width="4.7" height="4.4"/><rect x="0.00" y="12.10" width="4.7" height="4.4"/><rect x="6.30" y="12.10" width="4.7" height="4.4"/><rect x="12.60" y="12.10" width="4.7" height="4.4"/></svg>
<div class="abs" style="left:2147px;top:139.8px;width:0;height:0;border-left:5.35px solid transparent;border-right:5.35px solid transparent;border-top:5.4px solid #333"></div>
<svg class="abs" style="left:2190.7px;top:130.4px;width:17.1px;height:18.3px" viewBox="0 0 17.1 18.3" fill="#333"><rect x="0" y="13.9" width="17.1" height="4.4"/><path d="M5 0h10.9v10.3z"/><path d="M12 4.2L5.2 11.2" stroke="#333" stroke-width="4.6" stroke-dasharray="6.3 1 3" fill="none"/></svg>
<div class="abs" style="left:2213.8px;top:139.8px;width:0;height:0;border-left:5.35px solid transparent;border-right:5.35px solid transparent;border-top:5.4px solid #333"></div>
<div class="gbtn" style="left:2249.3px;top:119px;width:52.7px;height:44.5px;border-radius:4px"></div>
<svg class="abs" style="left:2265.8px;top:130.4px;width:19.4px;height:18.4px;overflow:visible" viewBox="0 0 19.4 18.4" fill="none" stroke="#333"><circle cx="7.7" cy="7.7" r="6.4" stroke-width="2.3"/><path d="M12.3 12.2L18 17.2" stroke-width="3"/></svg>
<div class="abs" style="left:353.7px;top:179.2px;width:1948.6px;height:703.4px;border:1px solid #f4f4f4;border-left:none"></div>
<div class="row hd" style="top:179.5px;height:56.5px;border-bottom:1.5px solid #ddd"><div class="c hd"  style="left:0.0px;width:61.5px"><span class="cb" style="left:21.1px;top:16.4px"></span></div><div class="c hd"  style="left:61.5px;width:79.5px">序号</div><div class="c hd"  style="left:141.0px;width:175.0px">用户名</div><div class="c hd"  style="left:316.0px;width:160.0px">昵称</div><div class="c hd"  style="left:476.0px;width:123.0px">金额</div><div class="c hd"  style="left:599.0px;width:88.0px">类型</div><div class="c hd"  style="left:687.0px;width:427.0px">摘要</div><div class="c hd"  style="left:1114.0px;width:146.0px">加入前余额</div><div class="c hd"  style="left:1260.0px;width:88.5px">类型</div><div class="c hd"  style="left:1348.5px;width:241.0px;padding:0 .4px 0 0">创建时间</div><div class="c hd"  style="left:1589.5px;width:241.5px;padding:0 .4px 0 0">更新时间</div><div class="c hd"  style="left:1831.0px;width:116.3px">操作</div></div>
<div class="row odd" style="top:235.6px"><div class="c " style="left:0.0px;width:61.5px"><span class="cb" style="left:21.1px;top:20.5px"></span></div><div class="c " style="left:61.5px;width:79.5px">190</div><div class="c " style="left:141.0px;width:175.0px">18888888888</div><div class="c " style="left:316.0px;width:160.0px">188****8888</div><div class="c " style="left:476.0px;width:123.0px">300.00</div><div class="c " style="left:599.0px;width:88.0px"><span style="color:#18bc9c">支出</span></div><div class="c " style="left:687.0px;width:427.0px">投资项目[村部充电桩]，使用余额300usdt</div><div class="c " style="left:1114.0px;width:146.0px">1007.49</div><div class="c " style="left:1260.0px;width:88.5px"><span style="color:#555">现金</span></div><div class="c " style="left:1348.5px;width:241.0px;padding:0 .4px 0 0">2025-11-17 03:33:31</div><div class="c " style="left:1589.5px;width:241.5px;padding:0 .4px 0 0">2025-11-17 03:33:31</div><div class="c " style="left:1831.0px;width:116.3px"><span class="ob" style="left:26.1px;top:17.4px;background:#18bc9c"><svg class="fa" viewBox="0 -1536 1536 1792" style="width:14.40px;height:16.80px;vertical-align:-2.40px;"><path transform="scale(1,-1)" d="M363 0l91 91l-235 235l-91 -91v-107h128v-128h107zM886 928q0 22 -22 22q-10 0 -17 -7l-542 -542q-7 -7 -7 -17q0 -22 22 -22q10 0 17 7l542 542q7 7 7 17zM832 1120l416 -416l-832 -832h-416v416zM1515 1024q0 -53 -37 -90l-166 -166l-416 416l166 165q36 38 90 38 q53 0 91 -38l235 -234q37 -39 37 -91z"/></svg></span><span class="ob" style="left:61.1px;top:17.4px;width:28px;background:#f75444"><svg class="fa" viewBox="0 -1536 1408 1792" style="width:13.20px;height:16.80px;vertical-align:-2.40px;"><path transform="scale(1,-1)" d="M512 160v704q0 14 -9 23t-23 9h-64q-14 0 -23 -9t-9 -23v-704q0 -14 9 -23t23 -9h64q14 0 23 9t9 23zM768 160v704q0 14 -9 23t-23 9h-64q-14 0 -23 -9t-9 -23v-704q0 -14 9 -23t23 -9h64q14 0 23 9t9 23zM1024 160v704q0 14 -9 23t-23 9h-64q-14 0 -23 -9t-9 -23v-704 q0 -14 9 -23t23 -9h64q14 0 23 9t9 23zM480 1152h448l-48 117q-7 9 -17 11h-317q-10 -2 -17 -11zM1408 1120v-64q0 -14 -9 -23t-23 -9h-96v-948q0 -83 -47 -143.5t-113 -60.5h-832q-66 0 -113 58.5t-47 141.5v952h-96q-14 0 -23 9t-9 23v64q0 14 9 23t23 9h309l70 167 q15 37 54 63t79 26h320q40 0 79 -26t54 -63l70 -167h309q14 0 23 -9t9 -23z"/></svg></span></div></div>
<div class="row" style="top:300.2px"><div class="c " style="left:0.0px;width:61.5px"><span class="cb" style="left:21.1px;top:20.5px"></span></div><div class="c " style="left:61.5px;width:79.5px">189</div><div class="c " style="left:141.0px;width:175.0px">13800138000</div><div class="c " style="left:316.0px;width:160.0px">138****8000</div><div class="c " style="left:476.0px;width:123.0px">3.00</div><div class="c " style="left:599.0px;width:88.0px"><span style="color:#555">收入</span></div><div class="c " style="left:687.0px;width:427.0px">下级购买，获得奖励3usdt</div><div class="c " style="left:1114.0px;width:146.0px">591283.26</div><div class="c " style="left:1260.0px;width:88.5px"><span style="color:#555">现金</span></div><div class="c " style="left:1348.5px;width:241.0px;padding:0 .4px 0 0">2025-11-17 03:33:31</div><div class="c " style="left:1589.5px;width:241.5px;padding:0 .4px 0 0">2025-11-17 03:33:31</div><div class="c " style="left:1831.0px;width:116.3px"><span class="ob" style="left:26.1px;top:17.4px;background:#18bc9c"><svg class="fa" viewBox="0 -1536 1536 1792" style="width:14.40px;height:16.80px;vertical-align:-2.40px;"><path transform="scale(1,-1)" d="M363 0l91 91l-235 235l-91 -91v-107h128v-128h107zM886 928q0 22 -22 22q-10 0 -17 -7l-542 -542q-7 -7 -7 -17q0 -22 22 -22q10 0 17 7l542 542q7 7 7 17zM832 1120l416 -416l-832 -832h-416v416zM1515 1024q0 -53 -37 -90l-166 -166l-416 416l166 165q36 38 90 38 q53 0 91 -38l235 -234q37 -39 37 -91z"/></svg></span><span class="ob" style="left:61.1px;top:17.4px;width:28px;background:#f75444"><svg class="fa" viewBox="0 -1536 1408 1792" style="width:13.20px;height:16.80px;vertical-align:-2.40px;"><path transform="scale(1,-1)" d="M512 160v704q0 14 -9 23t-23 9h-64q-14 0 -23 -9t-9 -23v-704q0 -14 9 -23t23 -9h64q14 0 23 9t9 23zM768 160v704q0 14 -9 23t-23 9h-64q-14 0 -23 -9t-9 -23v-704q0 -14 9 -23t23 -9h64q14 0 23 9t9 23zM1024 160v704q0 14 -9 23t-23 9h-64q-14 0 -23 -9t-9 -23v-704 q0 -14 9 -23t23 -9h64q14 0 23 9t9 23zM480 1152h448l-48 117q-7 9 -17 11h-317q-10 -2 -17 -11zM1408 1120v-64q0 -14 -9 -23t-23 -9h-96v-948q0 -83 -47 -143.5t-113 -60.5h-832q-66 0 -113 58.5t-47 141.5v952h-96q-14 0 -23 9t-9 23v64q0 14 9 23t23 9h309l70 167 q15 37 54 63t79 26h320q40 0 79 -26t54 -63l70 -167h309q14 0 23 -9t9 -23z"/></svg></span></div></div>
<div class="row odd" style="top:364.8px"><div class="c " style="left:0.0px;width:61.5px"><span class="cb" style="left:21.1px;top:20.5px"></span></div><div class="c " style="left:61.5px;width:79.5px">188</div><div class="c " style="left:141.0px;width:175.0px">13811112222</div><div class="c " style="left:316.0px;width:160.0px">138****2222</div><div class="c " style="left:476.0px;width:123.0px">9.00</div><div class="c " style="left:599.0px;width:88.0px"><span style="color:#555">收入</span></div><div class="c " style="left:687.0px;width:427.0px">下级购买，获得奖励9usdt</div><div class="c " style="left:1114.0px;width:146.0px">2970.92</div><div class="c " style="left:1260.0px;width:88.5px"><span style="color:#555">现金</span></div><div class="c " style="left:1348.5px;width:241.0px;padding:0 .4px 0 0">2025-11-17 03:33:31</div><div class="c " style="left:1589.5px;width:241.5px;padding:0 .4px 0 0">2025-11-17 03:33:31</div><div class="c " style="left:1831.0px;width:116.3px"><span class="ob" style="left:26.1px;top:17.4px;background:#18bc9c"><svg class="fa" viewBox="0 -1536 1536 1792" style="width:14.40px;height:16.80px;vertical-align:-2.40px;"><path transform="scale(1,-1)" d="M363 0l91 91l-235 235l-91 -91v-107h128v-128h107zM886 928q0 22 -22 22q-10 0 -17 -7l-542 -542q-7 -7 -7 -17q0 -22 22 -22q10 0 17 7l542 542q7 7 7 17zM832 1120l416 -416l-832 -832h-416v416zM1515 1024q0 -53 -37 -90l-166 -166l-416 416l166 165q36 38 90 38 q53 0 91 -38l235 -234q37 -39 37 -91z"/></svg></span><span class="ob" style="left:61.1px;top:17.4px;width:28px;background:#f75444"><svg class="fa" viewBox="0 -1536 1408 1792" style="width:13.20px;height:16.80px;vertical-align:-2.40px;"><path transform="scale(1,-1)" d="M512 160v704q0 14 -9 23t-23 9h-64q-14 0 -23 -9t-9 -23v-704q0 -14 9 -23t23 -9h64q14 0 23 9t9 23zM768 160v704q0 14 -9 23t-23 9h-64q-14 0 -23 -9t-9 -23v-704q0 -14 9 -23t23 -9h64q14 0 23 9t9 23zM1024 160v704q0 14 -9 23t-23 9h-64q-14 0 -23 -9t-9 -23v-704 q0 -14 9 -23t23 -9h64q14 0 23 9t9 23zM480 1152h448l-48 117q-7 9 -17 11h-317q-10 -2 -17 -11zM1408 1120v-64q0 -14 -9 -23t-23 -9h-96v-948q0 -83 -47 -143.5t-113 -60.5h-832q-66 0 -113 58.5t-47 141.5v952h-96q-14 0 -23 9t-9 23v64q0 14 9 23t23 9h309l70 167 q15 37 54 63t79 26h320q40 0 79 -26t54 -63l70 -167h309q14 0 23 -9t9 -23z"/></svg></span></div></div>
<div class="row" style="top:429.4px;background:#f5f5f5"><div class="c " style="left:0.0px;width:61.5px"><span class="cb" style="left:21.1px;top:20.5px"></span></div><div class="c " style="left:61.5px;width:79.5px">187</div><div class="c " style="left:141.0px;width:175.0px">13988888888</div><div class="c " style="left:316.0px;width:160.0px">139****8888</div><div class="c " style="left:476.0px;width:123.0px">15.00</div><div class="c " style="left:599.0px;width:88.0px"><span style="color:#555">收入</span></div><div class="c " style="left:687.0px;width:427.0px">下级购买，获得奖励15usdt</div><div class="c " style="left:1114.0px;width:146.0px">4536.55</div><div class="c " style="left:1260.0px;width:88.5px"><span style="color:#555">现金</span></div><div class="c " style="left:1348.5px;width:241.0px;padding:0 .4px 0 0">2025-11-17 03:33:31</div><div class="c " style="left:1589.5px;width:241.5px;padding:0 .4px 0 0">2025-11-17 03:33:31</div><div class="c " style="left:1831.0px;width:116.3px"><span class="ob" style="left:26.1px;top:17.4px;background:#18bc9c"><svg class="fa" viewBox="0 -1536 1536 1792" style="width:14.40px;height:16.80px;vertical-align:-2.40px;"><path transform="scale(1,-1)" d="M363 0l91 91l-235 235l-91 -91v-107h128v-128h107zM886 928q0 22 -22 22q-10 0 -17 -7l-542 -542q-7 -7 -7 -17q0 -22 22 -22q10 0 17 7l542 542q7 7 7 17zM832 1120l416 -416l-832 -832h-416v416zM1515 1024q0 -53 -37 -90l-166 -166l-416 416l166 165q36 38 90 38 q53 0 91 -38l235 -234q37 -39 37 -91z"/></svg></span><span class="ob" style="left:61.1px;top:17.4px;width:28px;background:#f75444"><svg class="fa" viewBox="0 -1536 1408 1792" style="width:13.20px;height:16.80px;vertical-align:-2.40px;"><path transform="scale(1,-1)" d="M512 160v704q0 14 -9 23t-23 9h-64q-14 0 -23 -9t-9 -23v-704q0 -14 9 -23t23 -9h64q14 0 23 9t9 23zM768 160v704q0 14 -9 23t-23 9h-64q-14 0 -23 -9t-9 -23v-704q0 -14 9 -23t23 -9h64q14 0 23 9t9 23zM1024 160v704q0 14 -9 23t-23 9h-64q-14 0 -23 -9t-9 -23v-704 q0 -14 9 -23t23 -9h64q14 0 23 9t9 23zM480 1152h448l-48 117q-7 9 -17 11h-317q-10 -2 -17 -11zM1408 1120v-64q0 -14 -9 -23t-23 -9h-96v-948q0 -83 -47 -143.5t-113 -60.5h-832q-66 0 -113 58.5t-47 141.5v952h-96q-14 0 -23 9t-9 23v64q0 14 9 23t23 9h309l70 167 q15 37 54 63t79 26h320q40 0 79 -26t54 -63l70 -167h309q14 0 23 -9t9 -23z"/></svg></span></div></div>
<div class="row odd" style="top:494.0px"><div class="c " style="left:0.0px;width:61.5px"><span class="cb" style="left:21.1px;top:20.5px"></span></div><div class="c " style="left:61.5px;width:79.5px">185</div><div class="c " style="left:141.0px;width:175.0px">13800138000</div><div class="c " style="left:316.0px;width:160.0px">138****8000</div><div class="c " style="left:476.0px;width:123.0px">1.83</div><div class="c " style="left:599.0px;width:88.0px"><span style="color:#555">收入</span></div><div class="c " style="left:687.0px;width:427.0px">AI量化机器人 第4期收益1.83usdt</div><div class="c " style="left:1114.0px;width:146.0px">591281.43</div><div class="c " style="left:1260.0px;width:88.5px"><span style="color:#555">现金</span></div><div class="c " style="left:1348.5px;width:241.0px;padding:0 .4px 0 0">2024-07-19 19:30:02</div><div class="c " style="left:1589.5px;width:241.5px;padding:0 .4px 0 0">2024-07-19 19:30:02</div><div class="c " style="left:1831.0px;width:116.3px"><span class="ob" style="left:26.1px;top:17.4px;background:#18bc9c"><svg class="fa" viewBox="0 -1536 1536 1792" style="width:14.40px;height:16.80px;vertical-align:-2.40px;"><path transform="scale(1,-1)" d="M363 0l91 91l-235 235l-91 -91v-107h128v-128h107zM886 928q0 22 -22 22q-10 0 -17 -7l-542 -542q-7 -7 -7 -17q0 -22 22 -22q10 0 17 7l542 542q7 7 7 17zM832 1120l416 -416l-832 -832h-416v416zM1515 1024q0 -53 -37 -90l-166 -166l-416 416l166 165q36 38 90 38 q53 0 91 -38l235 -234q37 -39 37 -91z"/></svg></span><span class="ob" style="left:61.1px;top:17.4px;width:28px;background:#f75444"><svg class="fa" viewBox="0 -1536 1408 1792" style="width:13.20px;height:16.80px;vertical-align:-2.40px;"><path transform="scale(1,-1)" d="M512 160v704q0 14 -9 23t-23 9h-64q-14 0 -23 -9t-9 -23v-704q0 -14 9 -23t23 -9h64q14 0 23 9t9 23zM768 160v704q0 14 -9 23t-23 9h-64q-14 0 -23 -9t-9 -23v-704q0 -14 9 -23t23 -9h64q14 0 23 9t9 23zM1024 160v704q0 14 -9 23t-23 9h-64q-14 0 -23 -9t-9 -23v-704 q0 -14 9 -23t23 -9h64q14 0 23 9t9 23zM480 1152h448l-48 117q-7 9 -17 11h-317q-10 -2 -17 -11zM1408 1120v-64q0 -14 -9 -23t-23 -9h-96v-948q0 -83 -47 -143.5t-113 -60.5h-832q-66 0 -113 58.5t-47 141.5v952h-96q-14 0 -23 9t-9 23v64q0 14 9 23t23 9h309l70 167 q15 37 54 63t79 26h320q40 0 79 -26t54 -63l70 -167h309q14 0 23 -9t9 -23z"/></svg></span></div></div>
<div class="row" style="top:558.6px"><div class="c " style="left:0.0px;width:61.5px"><span class="cb" style="left:21.1px;top:20.5px"></span></div><div class="c " style="left:61.5px;width:79.5px">184</div><div class="c " style="left:141.0px;width:175.0px">13988888888</div><div class="c " style="left:316.0px;width:160.0px">139****8888</div><div class="c " style="left:476.0px;width:123.0px">1000.00</div><div class="c " style="left:599.0px;width:88.0px"><span style="color:#18bc9c">支出</span></div><div class="c " style="left:687.0px;width:427.0px">会员申请提现</div><div class="c " style="left:1114.0px;width:146.0px">5536.55</div><div class="c " style="left:1260.0px;width:88.5px"><span style="color:#555">现金</span></div><div class="c " style="left:1348.5px;width:241.0px;padding:0 .4px 0 0">2024-07-19 19:13:59</div><div class="c " style="left:1589.5px;width:241.5px;padding:0 .4px 0 0">2024-07-19 19:13:59</div><div class="c " style="left:1831.0px;width:116.3px"><span class="ob" style="left:26.1px;top:17.4px;background:#18bc9c"><svg class="fa" viewBox="0 -1536 1536 1792" style="width:14.40px;height:16.80px;vertical-align:-2.40px;"><path transform="scale(1,-1)" d="M363 0l91 91l-235 235l-91 -91v-107h128v-128h107zM886 928q0 22 -22 22q-10 0 -17 -7l-542 -542q-7 -7 -7 -17q0 -22 22 -22q10 0 17 7l542 542q7 7 7 17zM832 1120l416 -416l-832 -832h-416v416zM1515 1024q0 -53 -37 -90l-166 -166l-416 416l166 165q36 38 90 38 q53 0 91 -38l235 -234q37 -39 37 -91z"/></svg></span><span class="ob" style="left:61.1px;top:17.4px;width:28px;background:#f75444"><svg class="fa" viewBox="0 -1536 1408 1792" style="width:13.20px;height:16.80px;vertical-align:-2.40px;"><path transform="scale(1,-1)" d="M512 160v704q0 14 -9 23t-23 9h-64q-14 0 -23 -9t-9 -23v-704q0 -14 9 -23t23 -9h64q14 0 23 9t9 23zM768 160v704q0 14 -9 23t-23 9h-64q-14 0 -23 -9t-9 -23v-704q0 -14 9 -23t23 -9h64q14 0 23 9t9 23zM1024 160v704q0 14 -9 23t-23 9h-64q-14 0 -23 -9t-9 -23v-704 q0 -14 9 -23t23 -9h64q14 0 23 9t9 23zM480 1152h448l-48 117q-7 9 -17 11h-317q-10 -2 -17 -11zM1408 1120v-64q0 -14 -9 -23t-23 -9h-96v-948q0 -83 -47 -143.5t-113 -60.5h-832q-66 0 -113 58.5t-47 141.5v952h-96q-14 0 -23 9t-9 23v64q0 14 9 23t23 9h309l70 167 q15 37 54 63t79 26h320q40 0 79 -26t54 -63l70 -167h309q14 0 23 -9t9 -23z"/></svg></span></div></div>
<div class="row odd" style="top:623.2px"><div class="c " style="left:0.0px;width:61.5px"><span class="cb" style="left:21.1px;top:20.5px"></span></div><div class="c " style="left:61.5px;width:79.5px">183</div><div class="c " style="left:141.0px;width:175.0px">13988888888</div><div class="c " style="left:316.0px;width:160.0px">139****8888</div><div class="c " style="left:476.0px;width:123.0px">100.00</div><div class="c " style="left:599.0px;width:88.0px"><span style="color:#18bc9c">支出</span></div><div class="c " style="left:687.0px;width:427.0px">会员申请提现</div><div class="c " style="left:1114.0px;width:146.0px">5636.55</div><div class="c " style="left:1260.0px;width:88.5px"><span style="color:#555">现金</span></div><div class="c " style="left:1348.5px;width:241.0px;padding:0 .4px 0 0">2024-07-19 19:12:51</div><div class="c " style="left:1589.5px;width:241.5px;padding:0 .4px 0 0">2024-07-19 19:12:51</div><div class="c " style="left:1831.0px;width:116.3px"><span class="ob" style="left:26.1px;top:17.4px;background:#18bc9c"><svg class="fa" viewBox="0 -1536 1536 1792" style="width:14.40px;height:16.80px;vertical-align:-2.40px;"><path transform="scale(1,-1)" d="M363 0l91 91l-235 235l-91 -91v-107h128v-128h107zM886 928q0 22 -22 22q-10 0 -17 -7l-542 -542q-7 -7 -7 -17q0 -22 22 -22q10 0 17 7l542 542q7 7 7 17zM832 1120l416 -416l-832 -832h-416v416zM1515 1024q0 -53 -37 -90l-166 -166l-416 416l166 165q36 38 90 38 q53 0 91 -38l235 -234q37 -39 37 -91z"/></svg></span><span class="ob" style="left:61.1px;top:17.4px;width:28px;background:#f75444"><svg class="fa" viewBox="0 -1536 1408 1792" style="width:13.20px;height:16.80px;vertical-align:-2.40px;"><path transform="scale(1,-1)" d="M512 160v704q0 14 -9 23t-23 9h-64q-14 0 -23 -9t-9 -23v-704q0 -14 9 -23t23 -9h64q14 0 23 9t9 23zM768 160v704q0 14 -9 23t-23 9h-64q-14 0 -23 -9t-9 -23v-704q0 -14 9 -23t23 -9h64q14 0 23 9t9 23zM1024 160v704q0 14 -9 23t-23 9h-64q-14 0 -23 -9t-9 -23v-704 q0 -14 9 -23t23 -9h64q14 0 23 9t9 23zM480 1152h448l-48 117q-7 9 -17 11h-317q-10 -2 -17 -11zM1408 1120v-64q0 -14 -9 -23t-23 -9h-96v-948q0 -83 -47 -143.5t-113 -60.5h-832q-66 0 -113 58.5t-47 141.5v952h-96q-14 0 -23 9t-9 23v64q0 14 9 23t23 9h309l70 167 q15 37 54 63t79 26h320q40 0 79 -26t54 -63l70 -167h309q14 0 23 -9t9 -23z"/></svg></span></div></div>
<div class="row" style="top:687.8px"><div class="c " style="left:0.0px;width:61.5px"><span class="cb" style="left:21.1px;top:20.5px"></span></div><div class="c " style="left:61.5px;width:79.5px">182</div><div class="c " style="left:141.0px;width:175.0px">13888888888</div><div class="c " style="left:316.0px;width:160.0px">138****8888</div><div class="c " style="left:476.0px;width:123.0px">100.00</div><div class="c " style="left:599.0px;width:88.0px"><span style="color:#18bc9c">支出</span></div><div class="c " style="left:687.0px;width:427.0px">会员申请提现</div><div class="c " style="left:1114.0px;width:146.0px">617.17</div><div class="c " style="left:1260.0px;width:88.5px"><span style="color:#555">现金</span></div><div class="c " style="left:1348.5px;width:241.0px;padding:0 .4px 0 0">2024-07-19 19:10:29</div><div class="c " style="left:1589.5px;width:241.5px;padding:0 .4px 0 0">2024-07-19 19:10:29</div><div class="c " style="left:1831.0px;width:116.3px"><span class="ob" style="left:26.1px;top:17.4px;background:#18bc9c"><svg class="fa" viewBox="0 -1536 1536 1792" style="width:14.40px;height:16.80px;vertical-align:-2.40px;"><path transform="scale(1,-1)" d="M363 0l91 91l-235 235l-91 -91v-107h128v-128h107zM886 928q0 22 -22 22q-10 0 -17 -7l-542 -542q-7 -7 -7 -17q0 -22 22 -22q10 0 17 7l542 542q7 7 7 17zM832 1120l416 -416l-832 -832h-416v416zM1515 1024q0 -53 -37 -90l-166 -166l-416 416l166 165q36 38 90 38 q53 0 91 -38l235 -234q37 -39 37 -91z"/></svg></span><span class="ob" style="left:61.1px;top:17.4px;width:28px;background:#f75444"><svg class="fa" viewBox="0 -1536 1408 1792" style="width:13.20px;height:16.80px;vertical-align:-2.40px;"><path transform="scale(1,-1)" d="M512 160v704q0 14 -9 23t-23 9h-64q-14 0 -23 -9t-9 -23v-704q0 -14 9 -23t23 -9h64q14 0 23 9t9 23zM768 160v704q0 14 -9 23t-23 9h-64q-14 0 -23 -9t-9 -23v-704q0 -14 9 -23t23 -9h64q14 0 23 9t9 23zM1024 160v704q0 14 -9 23t-23 9h-64q-14 0 -23 -9t-9 -23v-704 q0 -14 9 -23t23 -9h64q14 0 23 9t9 23zM480 1152h448l-48 117q-7 9 -17 11h-317q-10 -2 -17 -11zM1408 1120v-64q0 -14 -9 -23t-23 -9h-96v-948q0 -83 -47 -143.5t-113 -60.5h-832q-66 0 -113 58.5t-47 141.5v952h-96q-14 0 -23 9t-9 23v64q0 14 9 23t23 9h309l70 167 q15 37 54 63t79 26h320q40 0 79 -26t54 -63l70 -167h309q14 0 23 -9t9 -23z"/></svg></span></div></div>
<div class="row odd" style="top:752.4px"><div class="c " style="left:0.0px;width:61.5px"><span class="cb" style="left:21.1px;top:20.5px"></span></div><div class="c " style="left:61.5px;width:79.5px">181</div><div class="c " style="left:141.0px;width:175.0px">13888888888</div><div class="c " style="left:316.0px;width:160.0px">138****8888</div><div class="c " style="left:476.0px;width:123.0px">500.00</div><div class="c " style="left:599.0px;width:88.0px"><span style="color:#18bc9c">支出</span></div><div class="c " style="left:687.0px;width:427.0px">会员申请提现</div><div class="c " style="left:1114.0px;width:146.0px">1117.17</div><div class="c " style="left:1260.0px;width:88.5px"><span style="color:#555">现金</span></div><div class="c " style="left:1348.5px;width:241.0px;padding:0 .4px 0 0">2024-07-19 18:56:29</div><div class="c " style="left:1589.5px;width:241.5px;padding:0 .4px 0 0">2024-07-19 18:56:29</div><div class="c " style="left:1831.0px;width:116.3px"><span class="ob" style="left:26.1px;top:17.4px;background:#18bc9c"><svg class="fa" viewBox="0 -1536 1536 1792" style="width:14.40px;height:16.80px;vertical-align:-2.40px;"><path transform="scale(1,-1)" d="M363 0l91 91l-235 235l-91 -91v-107h128v-128h107zM886 928q0 22 -22 22q-10 0 -17 -7l-542 -542q-7 -7 -7 -17q0 -22 22 -22q10 0 17 7l542 542q7 7 7 17zM832 1120l416 -416l-832 -832h-416v416zM1515 1024q0 -53 -37 -90l-166 -166l-416 416l166 165q36 38 90 38 q53 0 91 -38l235 -234q37 -39 37 -91z"/></svg></span><span class="ob" style="left:61.1px;top:17.4px;width:28px;background:#f75444"><svg class="fa" viewBox="0 -1536 1408 1792" style="width:13.20px;height:16.80px;vertical-align:-2.40px;"><path transform="scale(1,-1)" d="M512 160v704q0 14 -9 23t-23 9h-64q-14 0 -23 -9t-9 -23v-704q0 -14 9 -23t23 -9h64q14 0 23 9t9 23zM768 160v704q0 14 -9 23t-23 9h-64q-14 0 -23 -9t-9 -23v-704q0 -14 9 -23t23 -9h64q14 0 23 9t9 23zM1024 160v704q0 14 -9 23t-23 9h-64q-14 0 -23 -9t-9 -23v-704 q0 -14 9 -23t23 -9h64q14 0 23 9t9 23zM480 1152h448l-48 117q-7 9 -17 11h-317q-10 -2 -17 -11zM1408 1120v-64q0 -14 -9 -23t-23 -9h-96v-948q0 -83 -47 -143.5t-113 -60.5h-832q-66 0 -113 58.5t-47 141.5v952h-96q-14 0 -23 9t-9 23v64q0 14 9 23t23 9h309l70 167 q15 37 54 63t79 26h320q40 0 79 -26t54 -63l70 -167h309q14 0 23 -9t9 -23z"/></svg></span></div></div>
<div class="row" style="top:817.0px"><div class="c " style="left:0.0px;width:61.5px"><span class="cb" style="left:21.1px;top:20.5px"></span></div><div class="c " style="left:61.5px;width:79.5px">180</div><div class="c " style="left:141.0px;width:175.0px">15822225555</div><div class="c " style="left:316.0px;width:160.0px">158****5555</div><div class="c " style="left:476.0px;width:123.0px">2.00</div><div class="c " style="left:599.0px;width:88.0px"><span style="color:#555">收入</span></div><div class="c " style="left:687.0px;width:427.0px">获取158****5555注册奖励2usdt</div><div class="c " style="left:1114.0px;width:146.0px">0.00</div><div class="c " style="left:1260.0px;width:88.5px"><span style="color:#555">现金</span></div><div class="c " style="left:1348.5px;width:241.0px;padding:0 .4px 0 0">2024-07-19 18:50:14</div><div class="c " style="left:1589.5px;width:241.5px;padding:0 .4px 0 0">2024-07-19 18:50:14</div><div class="c " style="left:1831.0px;width:116.3px"><span class="ob" style="left:26.1px;top:17.4px;background:#18bc9c"><svg class="fa" viewBox="0 -1536 1536 1792" style="width:14.40px;height:16.80px;vertical-align:-2.40px;"><path transform="scale(1,-1)" d="M363 0l91 91l-235 235l-91 -91v-107h128v-128h107zM886 928q0 22 -22 22q-10 0 -17 -7l-542 -542q-7 -7 -7 -17q0 -22 22 -22q10 0 17 7l542 542q7 7 7 17zM832 1120l416 -416l-832 -832h-416v416zM1515 1024q0 -53 -37 -90l-166 -166l-416 416l166 165q36 38 90 38 q53 0 91 -38l235 -234q37 -39 37 -91z"/></svg></span><span class="ob" style="left:61.1px;top:17.4px;width:28px;background:#f75444"><svg class="fa" viewBox="0 -1536 1408 1792" style="width:13.20px;height:16.80px;vertical-align:-2.40px;"><path transform="scale(1,-1)" d="M512 160v704q0 14 -9 23t-23 9h-64q-14 0 -23 -9t-9 -23v-704q0 -14 9 -23t23 -9h64q14 0 23 9t9 23zM768 160v704q0 14 -9 23t-23 9h-64q-14 0 -23 -9t-9 -23v-704q0 -14 9 -23t23 -9h64q14 0 23 9t9 23zM1024 160v704q0 14 -9 23t-23 9h-64q-14 0 -23 -9t-9 -23v-704 q0 -14 9 -23t23 -9h64q14 0 23 9t9 23zM480 1152h448l-48 117q-7 9 -17 11h-317q-10 -2 -17 -11zM1408 1120v-64q0 -14 -9 -23t-23 -9h-96v-948q0 -83 -47 -143.5t-113 -60.5h-832q-66 0 -113 58.5t-47 141.5v952h-96q-14 0 -23 9t-9 23v64q0 14 9 23t23 9h309l70 167 q15 37 54 63t79 26h320q40 0 79 -26t54 -63l70 -167h309q14 0 23 -9t9 -23z"/></svg></span></div></div>
<div class="abs" style="left:354px;top:898px;height:40px;line-height:42px;white-space:nowrap;color:#333;word-spacing:.7px">显示第 1 到第 10 条记录，总共 175 条记录 每页显示</div>
<div class="gbtn" style="left:808.7px;top:898.4px;width:71.2px;height:43.2px;border-radius:4px;font-size:17.7px;line-height:40px;padding-left:18px">10</div>
<div class="abs" style="left:851px;top:917px;width:0;height:0;border-left:5.4px solid transparent;border-right:5.4px solid transparent;border-bottom:5.4px solid #333"></div>
<div class="abs" style="left:885px;top:898px;height:40px;line-height:42px;white-space:nowrap;color:#333">条记录</div>
<div class="pg" style="left:1640.2px;width:90.9px;border-radius:4px 0 0 4px;"><span style="position:relative;top:1.2px">上一页</span></div>
<div class="pg" style="left:1731.1px;width:45.7px;background:#444c69;border-color:#444c69;color:#fff;">1</div>
<div class="pg" style="left:1776.8px;width:43.5px;">2</div>
<div class="pg" style="left:1820.3px;width:43.9px;">3</div>
<div class="pg" style="left:1864.2px;width:43.9px;">4</div>
<div class="pg" style="left:1908.1px;width:44.2px;">5</div>
<div class="pg" style="left:1952.3px;width:49.1px;background:#fff;color:#777;">...</div>
<div class="pg" style="left:2001.4px;width:54.9px;">18</div>
<div class="pg" style="left:2056.3px;width:92.3px;border-right-width:1.36px;border-radius:0 4px 4px 0;"><span style="position:relative;top:1.2px">下一页</span></div>
<div class="abs" style="left:2156px;top:895px;width:68.7px;height:45px;border:1.36px solid #d2d6de;background:#fff"></div>
<div class="gbtn" style="left:2231.2px;top:896.4px;width:70.5px;height:43.6px;border-radius:4px;text-align:center;line-height:43px;font-size:18.5px;color:#444">跳转</div>
</body></html>
